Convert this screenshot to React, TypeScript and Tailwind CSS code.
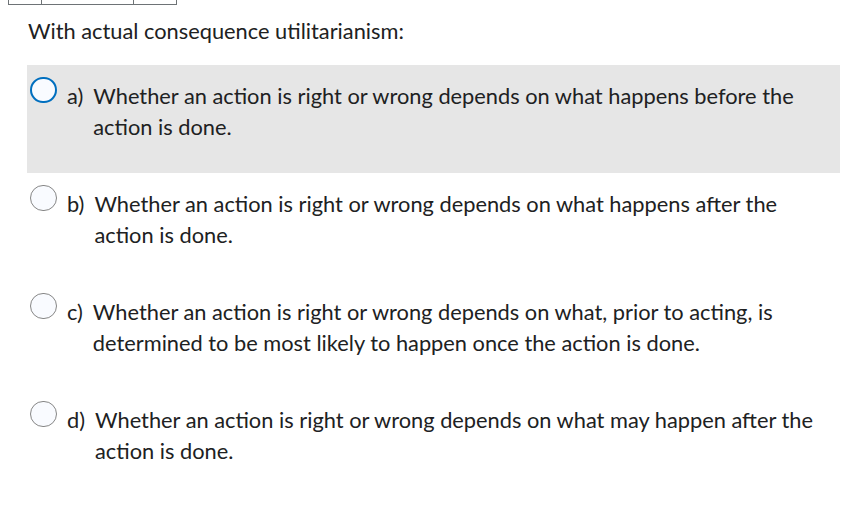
import React from 'react';

const options = [
  { label: 'a)', text: 'Whether an action is right or wrong depends on what happens before the action is done.' },
  { label: 'b)', text: 'Whether an action is right or wrong depends on what happens after the action is done.' },
  { label: 'c)', text: 'Whether an action is right or wrong depends on what, prior to acting, is determined to be most likely to happen once the action is done.' },
  { label: 'd)', text: 'Whether an action is right or wrong depends on what may happen after the action is done.' },
];

export default function App() {
  const selected = 0;

  return (
    <div className="w-[860px] h-[506px] bg-white text-[#202122] overflow-hidden" style={{ fontFamily: 'Lato, "Noto Sans", sans-serif' }}>
      {/* cropped table edge above */}
      <div className="flex pl-[8px] h-[5px]">
        <div className="w-[34px] border-l border-r border-b border-[#6e7376]" />
        <div className="w-[92px] border-r border-b border-[#6e7376]" />
        <div className="w-[43px] border-r border-b border-[#6e7376]" />
      </div>

      <div className="pl-[27px] pr-[20px]">
        <p className="mt-[10px] text-[21.8px] leading-[31px] pl-[1px]">With actual consequence utilitarianism:</p>

        <div className="mt-[19px] flex flex-col">
          {options.map((o, i) => (
            <div
              key={o.label}
              className={`flex items-start h-[108px] pl-[3px] pr-[16px] ${i === selected ? 'bg-[#e6e6e6]' : ''}`}
            >
              <span
                className={`mt-[12px] shrink-0 w-[27px] h-[26px] rounded-full bg-[#f9fbff] ${
                  i === selected ? 'border-2 border-[#006fbf]' : 'border border-[#868686]'
                }`}
              />
              <div className="mt-[15px] ml-[10px] flex gap-[10px] text-[21.8px] leading-[31px]">
                <span className="shrink-0">{o.label}</span>
                <span>{o.text}</span>
              </div>
            </div>
          ))}
        </div>
      </div>
    </div>
  );
}
